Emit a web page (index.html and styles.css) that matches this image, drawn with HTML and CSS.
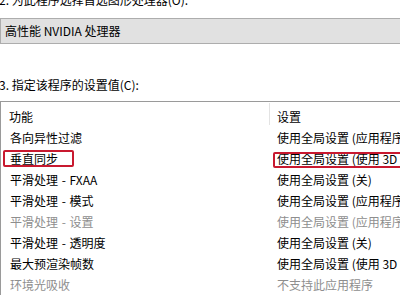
FILE: index.html
```html
<!DOCTYPE html>
<html>
<head>
<meta charset="utf-8">
<link rel="stylesheet" href="styles.css">
</head>
<body>
<div class="page">
  <div class="label label-top">2. 为此程序选择首选图形处理器(O):</div>
  <div class="combo">高性能 NVIDIA 处理器</div>
  <div class="label label-mid">3. 指定该程序的设置值(C):</div>
  <div class="list">
    <div class="head">功能</div>
    <div class="head head-sep">设置</div>

    <div class="cell">各向异性过滤</div>
    <div class="cell val">使用全局设置 (应用程序控制)</div>

    <div class="cell marked"><span class="mark mark-left"></span>垂直同步</div>
    <div class="cell val marked"><span class="mark mark-right"></span>使用全局设置 (使用 3D 应用程序设置)</div>

    <div class="cell">平滑处理 <span class="dash">-</span> FXAA</div>
    <div class="cell val">使用全局设置 (关)</div>

    <div class="cell">平滑处理 <span class="dash">-</span> 模式</div>
    <div class="cell val">使用全局设置 (应用程序控制)</div>

    <div class="cell dim">平滑处理 <span class="dash">-</span> 设置</div>
    <div class="cell val dim">使用全局设置 (应用程序控制)</div>

    <div class="cell">平滑处理 <span class="dash">-</span> 透明度</div>
    <div class="cell val">使用全局设置 (关)</div>

    <div class="cell">最大预渲染帧数</div>
    <div class="cell val">使用全局设置 (使用 3D 应用程序设置)</div>

    <div class="cell dim">环境光吸收</div>
    <div class="cell val dim">不支持此应用程序</div>
  </div>
</div>
</body>
</html>
```

FILE: styles.css
```css
html, body {
  margin: 0;
  padding: 0;
  background: #ffffff;
  overflow: hidden;
}
body {
  width: 400px;
  height: 300px;
  font-family: "Noto Sans CJK SC", "Noto Sans", sans-serif;
  font-size: 12px;
  color: #000000;
}
.page {
  width: 420px;
}
.label {
  height: 16px;
  line-height: 16px;
  white-space: nowrap;
  margin-left: -1px;
}
.label-top {
  margin-top: -8px;
}
.combo {
  margin-top: 10px;
  height: 24px;
  line-height: 24px;
  border: 1px solid #adadad;
  background: #e1e1e1;
  padding-left: 4px;
  white-space: nowrap;
}
.label-mid {
  margin-top: 33px;
}
.list {
  margin-top: 8px;
  border-left: 1px solid #9a9a9a;
  border-top: 1px solid #9a9a9a;
  display: grid;
  grid-template-columns: 268px 1fr;
  grid-template-rows: 25px;
  grid-auto-rows: 21px;
}
.head {
  height: 25px;
  line-height: 21px;
  padding-top: 4px;
  padding-left: 8px;
  box-sizing: border-box;
  white-space: nowrap;
}
.head-sep {
  border-left: 1px solid #e3e3e3;
  height: 22px;
  margin-top: 1px;
  padding-top: 3px;
  padding-left: 7px;
}
.cell {
  line-height: 21px;
  padding-left: 9px;
  white-space: nowrap;
  position: relative;
}
.cell.val {
  padding-left: 8px;
}
.dash {
  margin: 0 1px;
}
.dim {
  color: #8e8e8e;
}
.mark {
  position: absolute;
  border: 2px solid #c8192f;
  border-radius: 2px;
  box-sizing: border-box;
}
.mark-left {
  left: 2px;
  top: 2px;
  width: 71px;
  height: 17px;
}
.mark-right {
  left: 4px;
  top: 4px;
  width: 200px;
  height: 16px;
}
```
